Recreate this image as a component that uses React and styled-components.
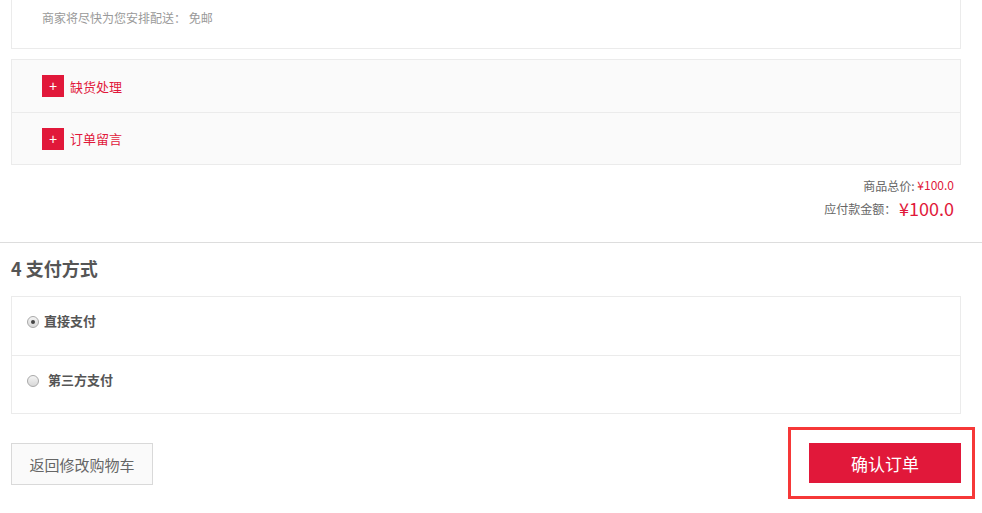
import React, { useState } from 'react';
import styled, { createGlobalStyle } from 'styled-components';

const GlobalStyle = createGlobalStyle`
  body{
    margin: 0;
    background: #fff;
    font-family: "Noto Sans CJK SC", "Liberation Sans", sans-serif;
    color: #666;
  }
  *{ box-sizing: border-box; }
`;

const Page = styled.div`
  width: 982px;
  padding-bottom: 28px;
  overflow: hidden;
`;

const Inner = styled.div`
  padding: 0 21px 0 11px;
`;

const DeliveryBox = styled.div`
  margin-top: -1px;
  height: 50px;
  border: 1px solid #ebebeb;
  padding: 8px 30px 0;
  font-size: 12px;
  line-height: 20px;
  color: #999;
`;

const OptionBox = styled.div`
  margin-top: 10px;
  border: 1px solid #ebebeb;
  background: #fafafa;
`;

const OptionRow = styled.div`
  height: 52px;
  padding: 0 30px;
  display: flex;
  align-items: center;
  gap: 6px;
  & + &{ border-top: 1px solid #ebebeb; }
`;

const PlusIcon = styled.span`
  width: 22px;
  height: 22px;
  background: #e1183a;
  color: #fff;
  font-family: "Liberation Sans", sans-serif;
  font-size: 14px;
  display: flex;
  align-items: center;
  justify-content: center;
  line-height: 1;
`;

const OptionText = styled.span`
  font-size: 13px;
  color: #e1183a;
`;

const Totals = styled.div`
  margin-top: 10px;
  padding-right: 7px;
  text-align: right;
  padding-bottom: 21px;
`;

const TotalLine = styled.div`
  height: ${p => p.$big ? '26px' : '20px'};
  display: flex;
  justify-content: flex-end;
  align-items: center;
  font-size: 12px;
  color: #666;
  white-space: pre;
`;

const Money = styled.span`
  color: #e1183a;
  font-size: ${p => p.$big ? '18px' : '12px'};
  line-height: 1;
`;

const Divider = styled.div`
  border-top: 1px solid #ddd;
`;

const Heading = styled.h3`
  margin: 10px 0 13px;
  font-size: 18px;
  line-height: 30px;
  font-weight: bold;
  color: #555;
`;

const PayBox = styled.div`
  border: 1px solid #ebebeb;
`;

const PayRow = styled.label`
  height: 58px;
  padding: 14px 15px 0;
  display: flex;
  align-items: flex-start;
  cursor: pointer;
  & + &{ border-top: 1px solid #ebebeb; }
`;

const Radio = styled.span`
  margin-top: 5px;
  width: 12px;
  height: 12px;
  border-radius: 50%;
  border: 1px solid #a9a9a9;
  background: linear-gradient(#f4f4f4, #d8d8d8);
  display: flex;
  align-items: center;
  justify-content: center;
  &::after{
    content: '';
    width: 4px;
    height: 4px;
    border-radius: 50%;
    background: ${p => p.$checked ? '#444' : 'transparent'};
  }
`;

const PayText = styled.span`
  margin-left: ${p => p.$gap}px;
  font-size: 13px;
  line-height: 20px;
  font-weight: bold;
  color: #555;
`;

const Actions = styled.div`
  margin-top: 29px;
  display: flex;
  justify-content: space-between;
  align-items: flex-start;
`;

const BackButton = styled.button`
  width: 142px;
  height: 42px;
  border: 1px solid #d9d9d9;
  background: #fafafa;
  font-family: inherit;
  font-size: 15px;
  color: #666;
  cursor: pointer;
`;

const Marked = styled.div`
  position: relative;
  &::after{
    content: '';
    position: absolute;
    left: -21px;
    right: -14px;
    top: -16px;
    bottom: -16px;
    border: 3px solid #f63838;
    pointer-events: none;
  }
`;

const ConfirmButton = styled.button`
  display: block;
  width: 152px;
  height: 40px;
  border: 0;
  background: #e1183a;
  color: #fff;
  font-family: inherit;
  font-size: 17px;
  cursor: pointer;
`;

export default function App(){
  const [pay, setPay] = useState('direct');

  return(
    <Page>
      <GlobalStyle />
      <Inner>
        <DeliveryBox>商家将尽快为您安排配送： 免邮</DeliveryBox>
        <OptionBox>
          <OptionRow>
            <PlusIcon>+</PlusIcon>
            <OptionText>缺货处理</OptionText>
          </OptionRow>
          <OptionRow>
            <PlusIcon>+</PlusIcon>
            <OptionText>订单留言</OptionText>
          </OptionRow>
        </OptionBox>
        <Totals>
          <TotalLine>商品总价: <Money>¥100.0</Money></TotalLine>
          <TotalLine $big>应付款金额： <Money $big>¥100.0</Money></TotalLine>
        </Totals>
      </Inner>
      <Divider />
      <Inner>
        <Heading>4 支付方式</Heading>
        <PayBox>
          <PayRow onClick={() => setPay('direct')}>
            <Radio $checked={pay === 'direct'} />
            <PayText $gap={5}>直接支付</PayText>
          </PayRow>
          <PayRow onClick={() => setPay('third')}>
            <Radio $checked={pay === 'third'} />
            <PayText $gap={9}>第三方支付</PayText>
          </PayRow>
        </PayBox>
        <Actions>
          <BackButton>返回修改购物车</BackButton>
          <Marked>
            <ConfirmButton>确认订单</ConfirmButton>
          </Marked>
        </Actions>
      </Inner>
    </Page>
  )
}
